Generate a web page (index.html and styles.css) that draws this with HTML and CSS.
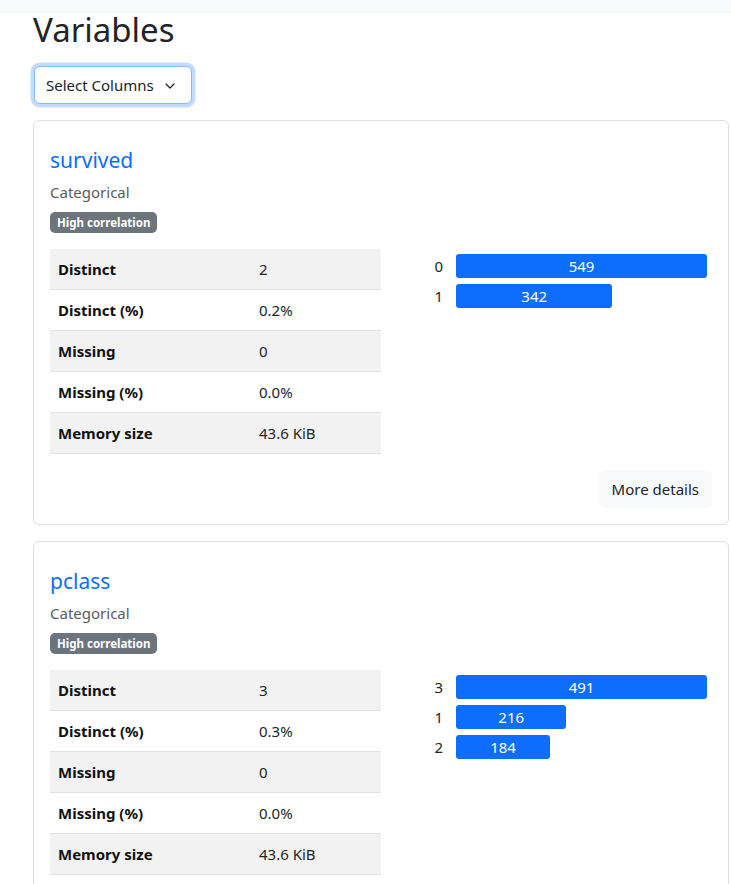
FILE: index.html
```html
<!DOCTYPE html>
<html lang="en">
<head>
<meta charset="utf-8">
<title>Variables</title>
<link rel="stylesheet" href="styles.css">
</head>
<body>
<div class="topbar"></div>
<main class="content">
  <h1 class="title">Variables</h1>
  <button class="select-btn" type="button">Select Columns
    <svg class="chev" width="10" height="6" viewBox="0 0 10 6"><path d="M1 1l4 4 4-4" fill="none" stroke="#212529" stroke-width="1.2" stroke-linecap="round" stroke-linejoin="round"/></svg>
  </button>

  <section class="card">
    <a class="var-name" href="#">survived</a>
    <div class="var-type">Categorical</div>
    <span class="badge">High correlation</span>
    <div class="var-grid">
      <table class="stats">
        <tr><th>Distinct</th><td>2</td></tr>
        <tr><th>Distinct (%)</th><td>0.2%</td></tr>
        <tr><th>Missing</th><td>0</td></tr>
        <tr><th>Missing (%)</th><td>0.0%</td></tr>
        <tr><th>Memory size</th><td>43.6 KiB</td></tr>
      </table>
      <div class="freq">
        <div class="freq-row"><span class="freq-label">0</span><div class="bar-track"><div class="bar" style="width:100%">549</div></div></div>
        <div class="freq-row"><span class="freq-label">1</span><div class="bar-track"><div class="bar" style="width:62.3%">342</div></div></div>
      </div>
    </div>
    <div class="card-actions"><button class="more-btn" type="button">More details</button></div>
  </section>

  <section class="card">
    <a class="var-name" href="#">pclass</a>
    <div class="var-type">Categorical</div>
    <span class="badge">High correlation</span>
    <div class="var-grid">
      <table class="stats">
        <tr><th>Distinct</th><td>3</td></tr>
        <tr><th>Distinct (%)</th><td>0.3%</td></tr>
        <tr><th>Missing</th><td>0</td></tr>
        <tr><th>Missing (%)</th><td>0.0%</td></tr>
        <tr><th>Memory size</th><td>43.6 KiB</td></tr>
      </table>
      <div class="freq">
        <div class="freq-row"><span class="freq-label">3</span><div class="bar-track"><div class="bar" style="width:100%">491</div></div></div>
        <div class="freq-row"><span class="freq-label">1</span><div class="bar-track"><div class="bar" style="width:44%">216</div></div></div>
        <div class="freq-row"><span class="freq-label">2</span><div class="bar-track"><div class="bar" style="width:37.5%">184</div></div></div>
      </div>
    </div>
    <div class="card-actions"><button class="more-btn" type="button">More details</button></div>
  </section>
</main>
</body>
</html>
```

FILE: styles.css
```css
* { box-sizing: border-box; }

html, body {
  margin: 0;
  padding: 0;
  background: #fff;
  color: #212529;
  font-family: "Noto Sans", "Open Sans", sans-serif;
  font-size: 15px;
}

.topbar {
  height: 13px;
  background: #f8f9fa;
}

.content {
  padding: 0 2px 0 33px;
}

.title {
  margin: 0 0 19px 0;
  font-size: 33px;
  line-height: 34px;
  font-weight: 400;
  color: #212529;
}

.select-btn {
  display: inline-flex;
  align-items: center;
  gap: 11px;
  margin-left: 1px;
  height: 38px;
  padding: 0 16px 0 11px;
  font-family: inherit;
  font-size: 15px;
  color: #212529;
  background: #fff;
  border: 1px solid #86b7fe;
  border-radius: 6px;
  box-shadow: 0 0 0 3.5px rgba(13, 110, 253, 0.25);
}

.chev { display: block; margin-top: 1px; }

.card {
  display: flex;
  flex-direction: column;
  align-items: flex-start;
  margin: 16px 0 16px 0;
  padding: 27px 16px 16px 16px;
  border: 1px solid #dfe0e1;
  border-radius: 6px;
}

.var-name {
  display: block;
  font-size: 21px;
  line-height: 25px;
  color: #0d6efd;
  text-decoration: none;
  margin-bottom: 7px;
}

.var-type {
  font-size: 15px;
  line-height: 24px;
  color: #595c5f;
  margin-bottom: 8px;
}

.badge {
  display: inline-block;
  padding: 4px 7px;
  font-size: 11.5px;
  line-height: 13px;
  font-weight: 700;
  color: #fff;
  background: #6c757d;
  border-radius: 5px;
  margin-bottom: 16px;
}

.var-grid {
  align-self: stretch;
  display: grid;
  grid-template-columns: 331px 1fr;
}

.stats {
  width: 331px;
  border-collapse: collapse;
  margin-bottom: 16px;
}

.stats tr { border-bottom: 1px solid #dee2e6; }
.stats tr:nth-child(odd) { background: #f2f2f2; }

.stats th,
.stats td {
  padding: 8px 8px;
  line-height: 24px;
  font-size: 15px;
  text-align: left;
  vertical-align: middle;
}

.stats th {
  width: 201px;
  font-weight: 700;
  color: #111;
}

.stats td { color: #212529; }

.freq {
  display: flex;
  flex-direction: column;
  gap: 6px;
  padding-top: 5px;
}

.freq-row {
  display: grid;
  grid-template-columns: 75px 251px;
  align-items: center;
}

.freq-label {
  text-align: right;
  padding-right: 13px;
  font-size: 15px;
  color: #212529;
}

.bar-track { height: 24px; }

.bar {
  height: 24px;
  line-height: 24px;
  text-align: center;
  font-size: 15px;
  color: #fff;
  background: #0d6efd;
  border-radius: 3px;
}

.card-actions {
  align-self: stretch;
  display: flex;
  justify-content: flex-end;
}

.more-btn {
  height: 38px;
  padding: 0 12px;
  font-family: inherit;
  font-size: 15px;
  color: #212529;
  background: #f8f9fa;
  border: 1px solid #f8f9fa;
  border-radius: 6px;
}
```
